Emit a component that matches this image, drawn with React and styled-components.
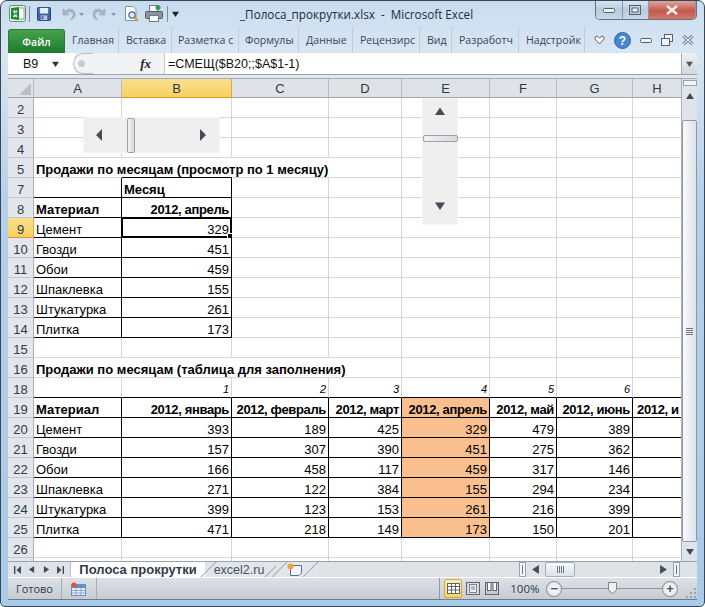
import React from "react";
import styled, { createGlobalStyle } from "styled-components";

const Global = createGlobalStyle`
  html, body { margin: 0; padding: 0; background: #fff; }
  * { box-sizing: border-box; }
`;

const uiFont = `"Open Sans", "Noto Sans", sans-serif`;
const cellFont = `"Liberation Sans", "Noto Sans", sans-serif`;
const colWidths = [88, 110, 97, 73, 88, 67, 76, 49];
const colNames = ["A", "B", "C", "D", "E", "F", "G", "H"];

const Win = styled.div`
  width: 705px;
  height: 607px;
  padding: 0 8px 6px;
  display: flex;
  flex-direction: column;
  border: 1px solid #3a4653;
  border-radius: 7px 7px 5px 5px;
  background: linear-gradient(#c8dcf0 0, #d9e6f3 50px, #b4d0ea 200px, #a8cbe9 100%);
  overflow: hidden;
`;

const TitleBar = styled.div`
  flex: none;
  height: 25px;
  margin: 0 -1px;
  display: flex;
  align-items: center;
`;

const Qat = styled.div`
  display: flex;
  align-items: center;
  width: 232px;
  padding-left: 1px;
`;

const QatItem = styled.span`
  display: flex;
  margin-left: ${(p) => p.$ml || 0}px;
`;

const QatSep = styled.span`
  width: 1px;
  height: 16px;
  margin-left: ${(p) => p.$ml}px;
  background: #7f8d9c;
`;

const Title = styled.div`
  font: 11.7px ${uiFont};
  color: #1e2b38;
  white-space: pre;
  width: 355px;
`;

const Controls = styled.div`
  display: flex;
  height: 19px;
  width: 102px;
  margin-top: -6px;
  border: 1px solid #66727f;
  border-top: none;
  border-radius: 0 0 5px 5px;
  overflow: hidden;
`;

const CtrlBtn = styled.div`
  flex: ${(p) => (p.$close ? "0 0 47px" : "1")};
  display: flex;
  align-items: center;
  justify-content: center;
  border-right: 1px solid #8a97a5;
  background: ${(p) =>
    p.$close
      ? "linear-gradient(#d9a79e, #c9574a 55%, #d0796c)"
      : "linear-gradient(#d8e4f0, #b7cbe0 50%, #c6d8ea)"};
`;

const Ribbon = styled.div`
  flex: none;
  height: 27px;
  margin: 0 -1px;
  display: flex;
  align-items: flex-end;
`;

const FileTab = styled.div`
  width: 57px;
  height: 24px;
  display: flex;
  align-items: center;
  justify-content: center;
  border-radius: 3px 3px 0 0;
  border: 1px solid #2f7a34;
  border-bottom: none;
  background: linear-gradient(#47a34a, #2c8a39 60%, #1f7a2e);
  color: #fff;
  font: 600 10.5px ${uiFont};
`;

const RibTab = styled.div`
  width: ${(p) => p.$w}px;
  height: 26px;
  padding: 0 0 0 ${(p) => p.$pad}px;
  display: flex;
  align-items: center;
  overflow: hidden;
  white-space: nowrap;
  font: 10.6px ${uiFont};
  color: #3b4653;
  border-right: 1px solid #c3ccd6;
`;

const RibIcons = styled.div`
  flex: 1;
  height: 26px;
  display: flex;
  align-items: center;
  gap: 9px;
  padding-left: 9px;
`;

const FormulaBar = styled.div`
  flex: none;
  height: 22px;
  margin: 0 -1px;
  display: flex;
  background: #f1f3f5;
  border-bottom: 1px solid #9aa2ab;
`;

const NameBox = styled.div`
  width: 67px;
  background: #fff;
  display: flex;
  align-items: center;
  padding-left: 15px;
  gap: 14px;
  font: 12.5px ${cellFont};
  color: #111;
`;

const Blob = styled.div`
  width: 20px;
  height: 21px;
  margin-left: -2px;
  border-radius: 50% 0 0 50%;
  border: 1px solid #b8bec5;
  border-right: none;
  background: #f1f3f5;
  display: flex;
  align-items: center;
  padding-left: 4px;
`;

const Dot = styled.span`
  width: 7px;
  height: 7px;
  border-radius: 50%;
  background: #c8ccd1;
`;

const FxBox = styled.div`
  width: 72px;
  padding-right: 13px;
  display: flex;
  align-items: center;
  justify-content: flex-end;
  font: italic bold 13px "Liberation Serif", serif;
  color: #222;
  border-right: 1px solid #c5cad0;
`;

const FormulaInput = styled.div`
  flex: 1;
  background: #fff;
  display: flex;
  align-items: center;
  padding-left: 3px;
  font: 12.5px ${cellFont};
  color: #111;
`;

const Expand = styled.div`
  width: 16px;
  display: flex;
  align-items: center;
  justify-content: center;
  background: linear-gradient(#eef1f4, #d3d8de);
  border-left: 1px solid #a9b1ba;
`;

const Gap = styled.div`
  flex: none;
  height: 4px;
  margin: 0 -1px;
  background: #e4e7eb;
  border-bottom: 1px solid #a4acb5;
`;

const SheetArea = styled.div`
  flex: none;
  display: flex;
  height: 482px;
  margin: 0 -1px;
`;

const SheetWrap = styled.div`
  position: relative;
  width: 674px;
  overflow: hidden;
  background: #fff;
`;

const Grid = styled.div`
  display: grid;
  grid-template-columns: 26px ${colWidths.map((w) => w + "px").join(" ")};
  grid-template-rows: 19px;
  grid-auto-rows: 20px;
`;

const Corner = styled.div`
  background: #dfe3e8;
  border-right: 1px solid #b5bcc4;
  border-bottom: 1px solid #9ea5ad;
  display: flex;
  align-items: flex-end;
  justify-content: flex-end;
  padding: 0 2px 2px 0;
`;

const ColHead = styled.div`
  display: flex;
  align-items: center;
  justify-content: center;
  font: 13px ${cellFont};
  color: #2d3a4a;
  background: ${(p) => (p.$active ? "linear-gradient(#f9e08e, #f8cf62)" : "#dfe3e8")};
  border-right: 1px solid ${(p) => (p.$active ? "#e2a93b" : "#b5bcc4")};
  border-bottom: 1px solid ${(p) => (p.$active ? "#dd9a2b" : "#9ea5ad")};
`;

const RowHead = styled.div`
  display: flex;
  align-items: center;
  justify-content: center;
  padding-top: 3px;
  font: 13px ${cellFont};
  color: #2d3a4a;
  background: ${(p) => (p.$active ? "linear-gradient(#f9e08e, #f8cf62)" : "#e3e6ea")};
  border-right: 1px solid ${(p) => (p.$active ? "#e2a93b" : "#a9b0b8")};
  border-bottom: 1px solid ${(p) => (p.$active ? "#dd9a2b" : "#c3c8ce")};
`;

const Cell = styled.div`
  position: relative;
  grid-column: span ${(p) => p.$span || 1};
  display: flex;
  align-items: center;
  justify-content: ${(p) => (p.$num ? "flex-end" : "flex-start")};
  padding: 3px 2px 0 ${(p) => p.$pl || 2}px;
  white-space: nowrap;
  overflow: ${(p) => (p.$sel ? "visible" : "hidden")};
  font-family: ${cellFont};
  font-size: ${(p) => (p.$small ? 11 : 13)}px;
  font-weight: ${(p) => (p.$bold ? 700 : 400)};
  font-style: ${(p) => (p.$small ? "italic" : "normal")};
  letter-spacing: ${(p) => (p.$tight ? "-0.35px" : "normal")};
  color: #000;
  background: ${(p) => (p.$fill ? "#fabf8f" : "#fff")};
  border-right: 1px solid ${(p) => (p.$r ? "#000" : "#d6d6d6")};
  border-bottom: 1px solid ${(p) => (p.$b ? "#000" : "#d6d6d6")};
  box-shadow: ${(p) => (p.$top ? "0 -1px 0 #000" : "none")};
`;

const Selection = styled.span`
  position: absolute;
  inset: -1px;
  border: 2px solid #000;
`;

const Handle = styled.span`
  position: absolute;
  right: -3px;
  bottom: -3px;
  width: 6px;
  height: 6px;
  background: #000;
  border: 1px solid #fff;
`;

const HForm = styled.div`
  position: absolute;
  left: 75px;
  top: 38px;
  width: 137px;
  height: 36px;
  display: flex;
  align-items: center;
  justify-content: space-between;
  padding: 0 13px 0 12px;
  background: #efefef;
  border: 1px solid #f4f4f4;
`;

const HThumb = styled.div`
  position: absolute;
  left: 43px;
  top: 0;
  width: 8px;
  height: 35px;
  background: linear-gradient(90deg, #f2f2f2, #d5d9de);
  border: 1px solid #9aa1a9;
  border-radius: 2px;
`;

const VForm = styled.div`
  position: absolute;
  left: 414px;
  top: 19px;
  width: 36px;
  height: 127px;
  display: flex;
  flex-direction: column;
  align-items: center;
  justify-content: space-between;
  padding: 6px 0 14px;
  background: #efefef;
  border: 1px solid #f4f4f4;
`;

const VThumb = styled.div`
  position: absolute;
  left: 0;
  top: 36px;
  width: 35px;
  height: 7px;
  background: linear-gradient(90deg, #f2f2f2, #d5d9de);
  border: 1px solid #9aa1a9;
  border-radius: 2px;
`;

const VScroll = styled.div`
  width: 16px;
  display: flex;
  flex-direction: column;
  align-items: center;
  background: #dfe4ea;
  border-left: 1px solid #aab1b9;
`;

const Splitter = styled.div`
  width: 14px;
  height: 6px;
  margin-top: 1px;
  background: #f3f5f7;
  border: 1px solid #9aa2ab;
`;

const ArrowBox = styled.div`
  height: ${(p) => p.$h}px;
  width: ${(p) => (p.$w ? p.$w + "px" : "auto")};
  margin-bottom: ${(p) => p.$mb || 0}px;
  display: flex;
  align-items: center;
  justify-content: center;
`;

const VThumbMain = styled.div`
  width: 15px;
  height: 422px;
  display: flex;
  align-items: center;
  justify-content: center;
  background: linear-gradient(90deg, #fafbfc, #dde3ea);
  border: 1px solid #8f97a1;
  border-radius: 2px;
`;

const Grip = styled.span`
  width: 7px;
  height: 7px;
  background: repeating-linear-gradient(#6d7580 0 1px, transparent 1px 2px);
`;

const TabStrip = styled.div`
  flex: none;
  height: 16px;
  margin: 0 -1px;
  display: flex;
  align-items: stretch;
  background: #dfe3e8;
  border-top: 1px solid #9aa2ab;
`;

const TabNav = styled.div`
  width: 63px;
  display: flex;
  align-items: center;
  justify-content: space-around;
  padding: 0 2px;
  border-right: 1px solid #b5bcc4;
`;

const ActiveTab = styled.div`
  display: flex;
  align-items: center;
  justify-content: center;
  width: 134px;
  white-space: nowrap;
  font: 700 13px ${cellFont};
  color: #2f3b4a;
  background: #fff;
`;

const SheetTab = styled.div`
  position: relative;
  display: flex;
  align-items: center;
  justify-content: center;
  width: ${(p) => p.$w}px;
  margin-left: ${(p) => p.$ml || 0}px;
  padding-right: ${(p) => p.$pr || 0}px;
  white-space: nowrap;
  font: 12.5px ${cellFont};
  color: #46525f;
  background: #e2e5e9;

  &::before,
  &::after {
    content: "";
    position: absolute;
    top: 0;
    bottom: 0;
    width: 1px;
    background: #8f97a1;
    transform: skewX(-45deg);
  }
  &::before {
    left: 3px;
  }
  &::after {
    right: ${(p) => p.$slant || 0}px;
  }
`;

const HScroll = styled.div`
  margin-left: auto;
  margin-right: 15px;
  width: 163px;
  display: flex;
  align-items: center;
`;

const HSplit = styled.div`
  width: 7px;
  height: 15px;
  margin-left: ${(p) => p.$ml || 0}px;
  margin-right: ${(p) => p.$mr || 0}px;
  background: #f3f5f7;
  border: 1px solid #9aa2ab;
  display: flex;
  align-items: center;
  justify-content: center;
`;

const HTick = styled.span`
  width: 1px;
  height: 9px;
  background: #6d7580;
`;

const HThumbMain = styled.div`
  width: 30px;
  height: 15px;
  display: flex;
  align-items: center;
  justify-content: center;
  background: linear-gradient(#f8f9fb, #dde3ea);
  border: 1px solid #a6aeb7;
  border-radius: 2px;
`;

const HGrip = styled.span`
  width: 7px;
  height: 7px;
  background: repeating-linear-gradient(90deg, #6d7580 0 1px, transparent 1px 2px);
`;

const HTrack = styled.div`
  flex: 1;
`;

const StatusBar = styled.div`
  flex: none;
  height: 23px;
  margin: 0 -1px;
  display: flex;
  align-items: center;
  background: linear-gradient(#dde1e6, #c6ccd3);
  border-top: 1px solid #fff;
  border-bottom: 1px solid #6d7a88;
  font: 11px ${uiFont};
  color: #2e3a47;
`;

const StatusCell = styled.div`
  height: 100%;
  width: ${(p) => p.$w}px;
  display: flex;
  align-items: center;
  justify-content: center;
  border-right: 1px solid #a7aeb6;
`;

const Spacer = styled.div`
  width: 344px;
  height: 100%;
  border-right: 1px solid #8e96a0;
`;

const ViewBtn = styled.div`
  width: ${(p) => p.$w}px;
  height: 19px;
  margin-left: ${(p) => p.$ml}px;
  display: flex;
  align-items: center;
  justify-content: center;
  border-radius: 2px;
  background: ${(p) => (p.$on ? "linear-gradient(#fdeeb5, #f9d367)" : "transparent")};
  border: 1px solid ${(p) => (p.$on ? "#d8a93a" : "transparent")};
`;

const Zoom = styled.div`
  margin-left: 10px;
  width: 36px;
  font-size: 11.5px;
  white-space: nowrap;
`;

const Round = styled.div`
  width: 16px;
  height: 16px;
  border-radius: 50%;
  border: 1px solid #8c949d;
  background: radial-gradient(#fff, #d8dce1);
  display: flex;
  align-items: center;
  justify-content: center;
  font: 700 13px/1 ${cellFont};
  color: #4a525c;
`;

const SliderTrack = styled.div`
  position: relative;
  width: 100px;
  height: 1px;
  background: #8c949d;
`;

const SliderThumb = styled.svg`
  position: absolute;
  left: 46px;
  top: -6px;
`;

const ResizeGrip = styled.svg`
  margin-left: 7px;
  margin-top: 8px;
`;

const Tri = ({ dir, size = 8, color = "#444c55" }) => {
  const pts = {
    up: "0,8 8,8 4,2",
    down: "0,2 8,2 4,8",
    left: "7,0 7,8 1,4",
    right: "1,0 1,8 7,4",
  };
  return (
    <svg width={size} height={size} viewBox="0 0 8 8">
      <polygon points={pts[dir]} fill={color} />
    </svg>
  );
};

// narrow arrows of the horizontal form control
const TallTri = ({ flip }) => (
  <svg width="7" height="12" viewBox="0 0 7 12">
    <polygon points={flip ? "1,0 1,12 7,6" : "6,0 6,12 0,6"} fill="#444c55" />
  </svg>
);

const EndTri = ({ flip }) => (
  <svg width="7" height="8" viewBox="0 0 7 8">
    <g transform={flip ? "translate(7,0) scale(-1,1)" : undefined}>
      <rect x="0" y="0" width="1.4" height="8" fill="#444c55" />
      <polygon points="7,0 7,8 2.5,4" fill="#444c55" />
    </g>
  </svg>
);

const ExcelLogo = () => (
  <svg width="17" height="17" viewBox="0 0 17 17">
    <rect x="0.5" y="0.5" width="16" height="16" rx="2" fill="#e8f3e6" stroke="#6c8c70" />
    <rect x="9" y="3" width="6" height="11" fill="#fff" stroke="#7fb07f" />
    <path d="M2 3 L10 2 V15 L2 14 Z" fill="#1f8a3a" />
    <path d="M4 5.5 L5.7 5.5 L8.4 12 L6.6 12 Z M8.4 5.5 L6.7 5.5 L4 12 L5.6 12 Z" fill="#fff" />
  </svg>
);

const SaveIcon = () => (
  <svg width="14" height="14" viewBox="0 0 15 15">
    <rect x="0.5" y="0.5" width="14" height="14" rx="1" fill="#3e62a6" stroke="#243f73" />
    <rect x="3" y="1" width="9" height="6" fill="#e8eef7" />
    <rect x="4" y="9" width="7" height="5" fill="#b9c6dc" />
    <rect x="5" y="10" width="2" height="3" fill="#3e62a6" />
  </svg>
);

const UndoIcon = ({ flip }) => (
  <svg width="24" height="14" viewBox="0 0 24 14">
    <g transform={flip ? "translate(14,0) scale(-1,1)" : undefined}>
      <path d="M2 2 V8 H8 L6 6 C8 4 11 4.5 12 7 C12.5 9 11 11 9 13 C13 12 15 9 14 6 C13 2 8 0.5 5 4 Z" fill="#aab4bf" stroke="#97a2ae" strokeWidth="0.5" />
    </g>
    <polygon points="18,6 23,6 20.5,9" fill="#8d98a4" />
  </svg>
);

const PreviewIcon = () => (
  <svg width="16" height="18" viewBox="0 0 16 18">
    <path d="M1.5 1.5 H9 L12 4.5 V15.5 H1.5 Z" fill="#fff" stroke="#8793a1" />
    <circle cx="8" cy="10" r="3.2" fill="#dbe9f6" stroke="#56657a" strokeWidth="1.2" />
    <path d="M10.5 12.5 L14 16" stroke="#d99a32" strokeWidth="2.2" />
  </svg>
);

const PrintIcon = () => (
  <svg width="18" height="17" viewBox="0 0 18 17">
    <rect x="4.5" y="0.5" width="8" height="6" fill="#fff" stroke="#6f7a86" />
    <rect x="0.5" y="6.5" width="17" height="7" rx="1" fill="#8a96a3" stroke="#4e5965" />
    <rect x="4.5" y="10.5" width="9" height="6" fill="#fff" stroke="#6f7a86" />
    <circle cx="13" cy="2.5" r="2.5" fill="#35a04a" />
  </svg>
);

const HelpIcon = () => (
  <svg width="17" height="17" viewBox="0 0 17 17">
    <circle cx="8.5" cy="8.5" r="8" fill="#4a86d0" stroke="#2f66ad" />
    <text x="8.5" y="13" textAnchor="middle" fontFamily="Liberation Sans" fontWeight="700" fontSize="12" fill="#fff">?</text>
  </svg>
);

const SheetIcon = () => (
  <svg width="15" height="14" viewBox="0 0 15 14">
    <rect x="0.5" y="2.5" width="14" height="11" fill="#e9f0f8" stroke="#6c8fb8" />
    <rect x="1" y="3" width="13" height="3" fill="#5f8fc8" />
    <path d="M1 8.5 H14 M1 11 H14 M5 6 V13 M10 6 V13" stroke="#8aa8cc" />
    <circle cx="3" cy="3" r="2.6" fill="#d9513f" />
  </svg>
);

const NewSheetIcon = () => (
  <svg width="16" height="13" viewBox="0 0 16 13">
    <path d="M3.5 2.5 H14.5 V10 L12 12.5 H3.5 Z" fill="#f2f6fa" stroke="#59708c" />
    <circle cx="3.5" cy="3.5" r="3" fill="#f0a53a" />
  </svg>
);

const GridIcon = () => (
  <svg width="13" height="11" viewBox="0 0 13 11">
    <rect x="0.5" y="0.5" width="12" height="10" fill="#fff" stroke="#5c6670" />
    <path d="M0.5 3.5 H12.5 M0.5 7 H12.5 M4.5 0.5 V10.5 M8.5 0.5 V10.5" stroke="#5c6670" />
  </svg>
);

const PageIcon = () => (
  <svg width="14" height="13" viewBox="0 0 14 13">
    <rect x="0.5" y="0.5" width="13" height="12" fill="#d9dde2" stroke="#5c6670" />
    <rect x="3.5" y="2.5" width="7" height="8" fill="#eef0f3" stroke="#7a838d" />
    <path d="M5 5 H9 M5 7 H9" stroke="#7a838d" />
  </svg>
);

const BreakIcon = () => (
  <svg width="14" height="13" viewBox="0 0 14 13">
    <rect x="0.5" y="0.5" width="13" height="12" fill="#c6ccd3" stroke="#5c6670" />
    <rect x="2.5" y="0.5" width="3.5" height="8" fill="#fff" stroke="#5c6670" />
    <rect x="8" y="0.5" width="3.5" height="8" fill="#fff" stroke="#5c6670" />
  </svg>
);

const ribbonTabs = [
  ["Главная", 54, 7],
  ["Вставка", 53, 7],
  ["Разметка с", 67, 6],
  ["Формулы", 60, 6],
  ["Данные", 54, 7],
  ["Рецензирс", 67, 7],
  ["Вид", 32, 7],
  ["Разработч", 67, 7],
  ["Надстройк", 66, 7],
];

const table1 = [
  ["Цемент", 329],
  ["Гвозди", 451],
  ["Обои", 459],
  ["Шпаклевка", 155],
  ["Штукатурка", 261],
  ["Плитка", 173],
];

const months = ["2012, январь", "2012, февраль", "2012, март", "2012, апрель", "2012, май", "2012, июнь", "2012, и"];

const table2 = [
  ["Цемент", 393, 189, 425, 329, 479, 389],
  ["Гвозди", 157, 307, 390, 451, 275, 362],
  ["Обои", 166, 458, 117, 459, 317, 146],
  ["Шпаклевка", 271, 122, 384, 155, 294, 234],
  ["Штукатурка", 399, 123, 153, 261, 216, 399],
  ["Плитка", 471, 218, 149, 173, 150, 201],
];

const blanks = (n) => Array.from({ length: n }, () => ({}));

const sheetRows = [
  { n: 2, cells: blanks(8) },
  { n: 3, cells: blanks(8) },
  { n: 4, cells: blanks(8) },
  {
    n: 5,
    cells: [{ t: "Продажи по месяцам (просмотр по 1 месяцу)", bold: true, span: 4 }, ...blanks(4)],
  },
  {
    n: 7,
    cells: [{ r: true, b: true }, { t: "Месяц", bold: true, r: true, b: true, top: true }, ...blanks(6)],
  },
  {
    n: 8,
    cells: [
      { t: "Материал", bold: true, r: true, b: true },
      { t: "2012, апрель", bold: true, tight: true, num: true, r: true, b: true },
      ...blanks(6),
    ],
  },
  ...table1.map(([name, v], i) => ({
    n: 9 + i,
    active: i === 0,
    cells: [
      { t: name, r: true, b: true },
      { t: v, num: true, r: true, b: true, sel: i === 0 },
      ...blanks(6),
    ],
  })),
  { n: 15, cells: blanks(8) },
  {
    n: 16,
    cells: [{ t: "Продажи по месяцам (таблица для заполнения)", bold: true, span: 4 }, ...blanks(4)],
  },
  {
    n: 18,
    cells: [
      { b: true },
      ...[1, 2, 3, 4, 5, 6].map((v) => ({ t: v, num: true, small: true, b: true })),
      { b: true },
    ],
  },
  {
    n: 19,
    cells: [
      { t: "Материал", bold: true, r: true, b: true },
      ...months.map((m, i) => ({
        t: m,
        bold: true,
        tight: true,
        num: i < 6,
        r: true,
        b: true,
        fill: i === 3,
        pl: i === 6 ? 4 : 2,
      })),
    ],
  },
  ...table2.map((row, i) => ({
    n: 20 + i,
    cells: [
      { t: row[0], r: true, b: true },
      ...row.slice(1).map((v, j) => ({ t: v, num: true, r: true, b: true, fill: j === 3 })),
      { r: true, b: true },
    ],
  })),
  { n: 26, cells: blanks(8) },
  { n: 27, cells: blanks(8) },
];

export default function App() {
  return (
    <Win>
      <Global />
      <TitleBar>
        <Qat>
          <ExcelLogo />
          <QatSep $ml={3} />
          <QatItem $ml={7}><SaveIcon /></QatItem>
          <QatItem $ml={10}><UndoIcon /></QatItem>
          <QatItem $ml={8}><UndoIcon flip /></QatItem>
          <QatItem $ml={7}><PreviewIcon /></QatItem>
          <QatItem $ml={5}><PrintIcon /></QatItem>
          <QatSep $ml={4} />
          <QatItem $ml={4}><Tri dir="down" size={7} color="#222" /></QatItem>
        </Qat>
        <Title>_Полоса_прокрутки.xlsx  -  Microsoft Excel</Title>
        <Controls>
          <CtrlBtn>
            <svg width="12" height="5" viewBox="0 0 12 5">
              <rect x="0.5" y="0.5" width="11" height="4" rx="1" fill="#eef3f8" stroke="#55606c" />
            </svg>
          </CtrlBtn>
          <CtrlBtn>
            <svg width="12" height="10" viewBox="0 0 12 10">
              <rect x="0.5" y="0.5" width="11" height="9" fill="none" stroke="#55606c" />
              <rect x="3" y="3" width="6" height="4" fill="#eef3f8" stroke="#55606c" />
            </svg>
          </CtrlBtn>
          <CtrlBtn $close>
            <svg width="14" height="10" viewBox="0 0 14 10">
              <path d="M2 1 L12 9 M12 1 L2 9" stroke="#f4f1ee" strokeWidth="2.6" />
            </svg>
          </CtrlBtn>
        </Controls>
      </TitleBar>

      <Ribbon>
        <FileTab>Файл</FileTab>
        {ribbonTabs.map(([label, w, pad]) => (
          <RibTab key={label} $w={w} $pad={pad}>
            {label}
          </RibTab>
        ))}
        <RibIcons>
          <svg width="11" height="10" viewBox="0 0 11 10">
            <path d="M1 2 L3 1 L5.5 3 L8 1 L10 2 L10 4 L5.5 9 L1 4 Z" fill="#fff" stroke="#5b6773" />
          </svg>
          <HelpIcon />
          <svg width="12" height="5" viewBox="0 0 12 5">
            <rect x="0.5" y="0.5" width="11" height="4" rx="1" fill="#eef3f8" stroke="#55606c" />
          </svg>
          <svg width="12" height="12" viewBox="0 0 12 12">
            <rect x="3.5" y="0.5" width="8" height="7" fill="#eef3f8" stroke="#55606c" />
            <rect x="0.5" y="4.5" width="8" height="7" fill="#eef3f8" stroke="#55606c" />
          </svg>
          <svg width="12" height="10" viewBox="0 0 12 10">
            <path d="M1.5 1 L10.5 9 M10.5 1 L1.5 9" stroke="#55606c" strokeWidth="3" />
            <path d="M1.5 1 L10.5 9 M10.5 1 L1.5 9" stroke="#eef3f8" strokeWidth="1.2" />
          </svg>
        </RibIcons>
      </Ribbon>

      <FormulaBar>
        <NameBox>
          B9
          <Tri dir="down" size={7} color="#333" />
        </NameBox>
        <Blob>
          <Dot />
        </Blob>
        <FxBox>fx</FxBox>
        <FormulaInput>=СМЕЩ($B20;;$A$1-1)</FormulaInput>
        <Expand>
          <Tri dir="down" size={7} color="#555" />
        </Expand>
      </FormulaBar>
      <Gap />

      <SheetArea>
        <SheetWrap>
          <Grid>
            <Corner>
              <svg width="12" height="12" viewBox="0 0 12 12">
                <polygon points="12,0 12,12 0,12" fill="#b9bfc6" />
              </svg>
            </Corner>
            {colNames.map((c) => (
              <ColHead key={c} $active={c === "B"}>
                {c}
              </ColHead>
            ))}
            {sheetRows.map((row) => (
              <React.Fragment key={row.n}>
                <RowHead $active={row.active}>{row.n}</RowHead>
                {row.cells.map((c, i) => (
                  <Cell
                    key={i}
                    $span={c.span}
                    $bold={c.bold}
                    $tight={c.tight}
                    $num={c.num}
                    $small={c.small}
                    $r={c.r}
                    $b={c.b}
                    $top={c.top}
                    $fill={c.fill}
                    $sel={c.sel}
                    $pl={c.pl}
                  >
                    {c.t}
                    {c.sel && (
                      <Selection>
                        <Handle />
                      </Selection>
                    )}
                  </Cell>
                ))}
              </React.Fragment>
            ))}
          </Grid>
          <HForm>
            <TallTri />
            <HThumb />
            <TallTri flip />
          </HForm>
          <VForm>
            <Tri dir="up" size={10} />
            <VThumb />
            <Tri dir="down" size={10} />
          </VForm>
        </SheetWrap>
        <VScroll>
          <Splitter />
          <ArrowBox $h={18} $mb={16}>
            <Tri dir="up" />
          </ArrowBox>
          <VThumbMain>
            <Grip />
          </VThumbMain>
          <ArrowBox $h={18}>
            <Tri dir="down" />
          </ArrowBox>
        </VScroll>
      </SheetArea>

      <TabStrip>
        <TabNav>
          <EndTri />
          <Tri dir="left" size={7} />
          <Tri dir="right" size={7} />
          <EndTri flip />
        </TabNav>
        <ActiveTab>Полоса прокрутки</ActiveTab>
        <SheetTab $w={68}>excel2.ru</SheetTab>
        <SheetTab $w={42} $ml={3} $pr={4} $slant={7}>
          <NewSheetIcon />
        </SheetTab>
        <HScroll>
          <HSplit><HTick /></HSplit>
          <ArrowBox $h={15} $w={19}>
            <Tri dir="left" size={9} />
          </ArrowBox>
          <HThumbMain>
            <HGrip />
          </HThumbMain>
          <HTrack />
          <Tri dir="right" size={9} />
          <HSplit $ml={5} $mr={2}><HTick /></HSplit>
        </HScroll>
      </TabStrip>

      <StatusBar>
        <StatusCell $w={54}>Готово</StatusCell>
        <StatusCell $w={35}>
          <SheetIcon />
        </StatusCell>
        <Spacer />
        <ViewBtn $on $w={18} $ml={4}>
          <GridIcon />
        </ViewBtn>
        <ViewBtn $w={17} $ml={2}>
          <PageIcon />
        </ViewBtn>
        <ViewBtn $w={17} $ml={2}>
          <BreakIcon />
        </ViewBtn>
        <Zoom>100%</Zoom>
        <Round>−</Round>
        <SliderTrack>
          <SliderThumb width="9" height="12" viewBox="0 0 9 12">
            <path d="M0.5 0.5 H8.5 V8 L4.5 11.5 L0.5 8 Z" fill="#eef0f3" stroke="#7d858e" />
          </SliderThumb>
        </SliderTrack>
        <Round>+</Round>
        <ResizeGrip width="12" height="12" viewBox="0 0 12 12">
          <path d="M9 1 H11 V3 H9 Z M5 5 H7 V7 H5 Z M9 5 H11 V7 H9 Z M1 9 H3 V11 H1 Z M5 9 H7 V11 H5 Z M9 9 H11 V11 H9 Z" fill="#9aa2ab" />
        </ResizeGrip>
      </StatusBar>
    </Win>
  );
}
